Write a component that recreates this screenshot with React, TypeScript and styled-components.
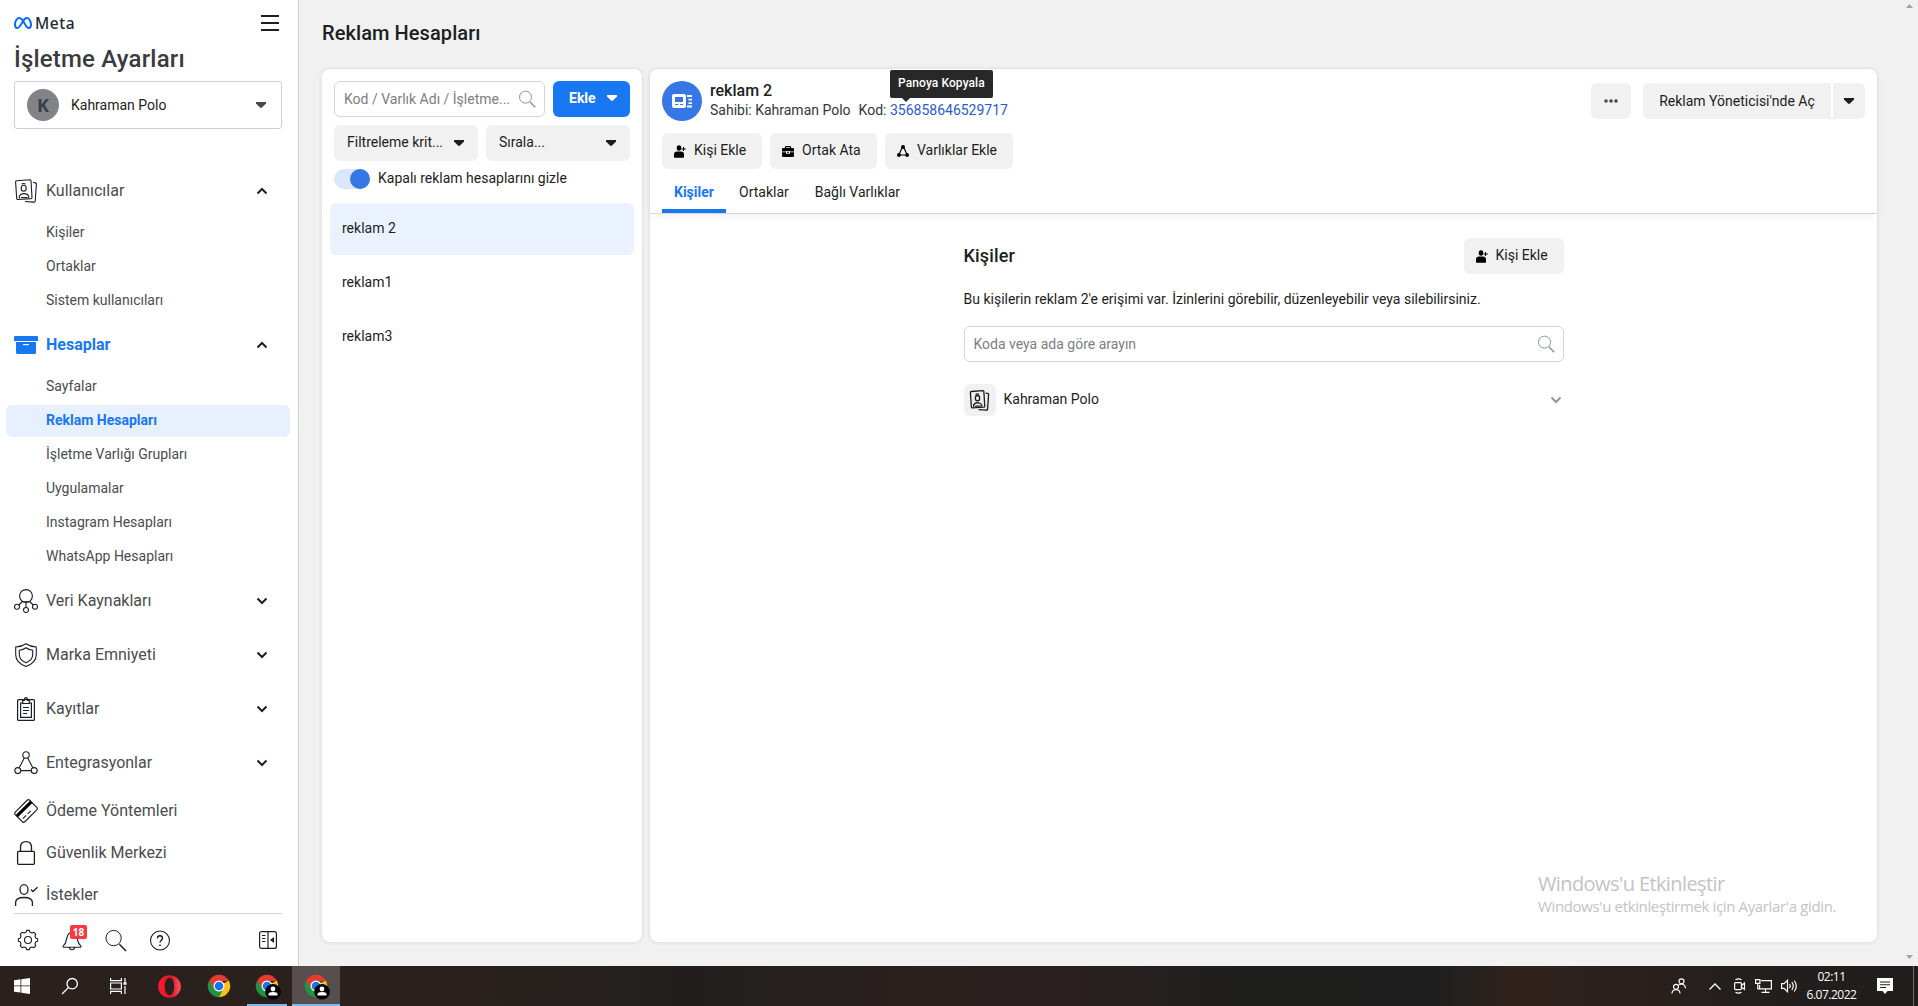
import React from "react";
import styled, { createGlobalStyle, css } from "styled-components";

const Global = createGlobalStyle`
  * { box-sizing: border-box; }
  body { margin: 0; font-family: Roboto, "Liberation Sans", sans-serif; font-size: 14px; color: #1c1e21; overflow: hidden; }
  button, input { font-family: inherit; }
`;

const Screen = styled.div`
  width: 1918px; height: 1006px; display: flex; flex-direction: column; background: #f1f1f1; position: relative; overflow: hidden;
`;
const Workspace = styled.div`flex: 1; display: flex; min-height: 0;`;

/* ---------- sidebar ---------- */
const Sidebar = styled.aside`
  width: 299px; background: #fff; border-right: 1px solid #d0d0d0; display: flex; flex-direction: column; flex-shrink: 0;
`;
const BrandRow = styled.div`
  height: 42px; padding: 4px 19px 0 14px; display: flex; align-items: center; justify-content: space-between;
`;
const Brand = styled.div`
  display: flex; align-items: center; gap: 3px; font: 500 15.5px/20px "Noto Sans", sans-serif; color: #1c2b33; letter-spacing: 0.6px;
`;
const SidebarTitle = styled.h1`
  margin: 0 14px; height: 34px; font-size: 24px; line-height: 34px; font-weight: 500; color: #3a3b3e; white-space: nowrap;
  letter-spacing: 0.18px;
`;
const AccountPicker = styled.button`
  margin: 5px 16px 0 14px; height: 48px; padding: 0 15px 0 12px; border: 1px solid #ccd0d5; border-radius: 3px; background: #fff;
  display: flex; align-items: center; gap: 12px; font-size: 14px; color: #1c1e21; text-align: left;
  > svg { color: #444950; }
`;
const Avatar = styled.span`
  width: 32px; height: 32px; border-radius: 50%; background: #828387; color: #343d4c; display: grid; place-items: center;
  font: 700 18px/1 "Open Sans", sans-serif;
`;
const Grow = styled.span`flex: 1;`;
const Nav = styled.nav`flex: 1; padding-top: 41px; min-height: 0;`;
const Section = styled.div<{ $gap: number }>`margin-bottom: ${(p) => p.$gap}px;`;
const SectionHead = styled.div<{ $active?: boolean }>`
  height: 42px; padding: 0 30px 0 14px; display: flex; align-items: center; gap: 8px; font-size: 16px; white-space: nowrap;
  color: ${(p) => (p.$active ? "#1877f2" : "#4b4c4f")}; font-weight: ${(p) => (p.$active ? 700 : 400)};
  > svg { color: ${(p) => (p.$active ? "#1877f2" : "#1c1e21")}; flex-shrink: 0; }
  > svg:last-child { color: #1c1e21; }
`;
const HeadLabel = styled.span`padding-bottom: 1px;`;
const SubList = styled.div`padding: 5px 8px 0 6px; display: flex; flex-direction: column; gap: 2px;`;
const SubItem = styled.div<{ $active?: boolean }>`
  height: 32px; line-height: 31px; padding-left: 40px; border-radius: 6px; font-size: 14px; white-space: nowrap;
  color: ${(p) => (p.$active ? "#1877f2" : "#4b4c4f")};
  font-weight: ${(p) => (p.$active ? 700 : 400)};
  background: ${(p) => (p.$active ? "#e7f0fd" : "transparent")};
`;
const SideFooter = styled.div`
  height: 53px; margin: 0 16px 0 14px; border-top: 1px solid #d2d4d8; display: flex; align-items: center; padding: 0 5px 0 2px;
  gap: 20px; color: #1c1e21;
`;
const BellWrap = styled.span`position: relative; display: flex;`;
const Badge = styled.span`
  position: absolute; left: 10px; top: -3px; width: 17px; height: 14px; border-radius: 2px; background: #fa383e; color: #fff;
  font: 700 10px/14px "Open Sans", sans-serif; text-align: center;
`;

/* ---------- main ---------- */
const Main = styled.main`flex: 1; display: flex; flex-direction: column; padding: 0 24px 24px 23px; min-width: 0;`;
const PageTitle = styled.h2`
  margin: 0; height: 69px; line-height: 66px; font-size: 20px; font-weight: 500; color: #1c1e21; letter-spacing: 0.08px;
`;
const Panels = styled.div`flex: 1; display: flex; gap: 8px; min-height: 0;`;
const card = css`background: #fff; border-radius: 8px; box-shadow: 0 0 4px rgba(0, 0, 0, 0.12);`;
const ListPanel = styled.section`${card} width: 320px; padding: 12px 8px; display: flex; flex-direction: column;`;
const Row = styled.div<{ $mt?: number }>`display: flex; gap: 8px; padding: 0 4px; margin-top: ${(p) => p.$mt ?? 0}px;`;
const SearchBox = styled.div`
  flex: 1; height: 36px; border: 1px solid #d3d5d9; border-radius: 6px; display: flex; align-items: center; background: #fff;
  padding: 0 8px 0 9px; color: #7c7e84; justify-content: space-between; white-space: nowrap;
  svg { color: #8d949e; }
`;
const Primary = styled.button`
  width: 77px; height: 36px; border: 0; border-radius: 6px; background: #1877f2; color: #fff; font-size: 14px; font-weight: 700;
  padding: 0 13px 2px 16px; display: flex; align-items: center; justify-content: space-between;
`;
const Dropdown = styled.button`
  flex: 1; height: 36px; border: 0; border-radius: 6px; background: #f1f1f1; color: #1c1e21; font-size: 14px;
  padding: 0 14px 2px 13px; display: flex; align-items: center; justify-content: space-between;
  svg { margin-top: 1px; }
`;
const ToggleRow = styled.div`
  height: 20px; margin: 8px 4px 14px; display: flex; align-items: center; gap: 8px; line-height: 18px;
`;
const ToggleLabel = styled.span`padding-bottom: 2px;`;
const Toggle = styled.span`
  width: 36px; height: 20px; border-radius: 10px; background: #dbe8fc; display: flex; justify-content: flex-end;
  &::after { content: ""; width: 20px; height: 20px; border-radius: 50%; background: #3578e5; }
`;
const AssetRow = styled.div<{ $active?: boolean }>`
  height: 52px; margin-bottom: 2px; padding: 0 12px 2px; border-radius: 6px; display: flex; align-items: center;
  background: ${(p) => (p.$active ? "#ebf2ff" : "transparent")};
`;

const Detail = styled.section`${card} flex: 1; display: flex; flex-direction: column; min-width: 0;`;
const DetailHead = styled.header`
  height: 145px; padding: 12px 12px 0; border-bottom: 1px solid #d6d8da; display: flex; flex-direction: column;
  box-shadow: 0 5px 10px -4px rgba(0, 0, 0, 0.08);
`;
const HeadTop = styled.div`height: 40px; display: flex; align-items: center; gap: 8px;`;
const AssetIcon = styled.div`
  width: 40px; height: 40px; border-radius: 50%; background: #3578e5; display: grid; place-items: center; color: #fff;
`;
const AssetMeta = styled.div`flex: 1; white-space: nowrap;`;
const AssetName = styled.div`font-size: 16px; font-weight: 500; line-height: 17px; height: 19px;`;
const MetaLine = styled.div`display: flex; gap: 8px; line-height: 19px; height: 19px; color: #33363a;`;
const Code = styled.span`position: relative; color: #2a5bd0;`;
const Tip = styled.span`
  position: absolute; left: 0; bottom: 20px; width: 103px; height: 28px; border-radius: 2px; background: #282828; color: #fff;
  font-size: 12px; font-weight: 500; line-height: 27px; text-align: center; letter-spacing: 0.1px;
  &::after { content: ""; position: absolute; left: 12px; top: 28px; border: 4px solid transparent; border-top-color: #282828; border-bottom: 0; }
`;
const Button = styled.button<{ $w: number; $r?: string }>`
  width: ${(p) => p.$w}px; height: 36px; border: 0; border-radius: ${(p) => p.$r ?? "6px"}; background: #f1f1f1; color: #1c1e21;
  font-size: 14px; padding: 0 0 1px; display: flex; align-items: center; justify-content: center; gap: 8px; white-space: nowrap;
`;
const ActionButton = styled(Button)`justify-content: flex-start; padding: 0 0 2px 12px; svg { margin-top: 2px; }`;
const Split = styled.div`display: flex; gap: 2px; margin-left: 4px;`;
const Actions = styled.div`display: flex; gap: 8px; margin-top: 12px;`;
const Tabs = styled.div`display: flex; height: 44px; margin-top: auto;`;
const Tab = styled.div<{ $active?: boolean }>`
  padding: 0 13px; line-height: 46px; height: 44px; ${(p) =>
    p.$active && "width: 64px; padding: 0 0 0 12px; color: #1877f2; font-weight: 700; border-bottom: 4px solid #1877f2;"}
`;
const People = styled.div`width: 600px; margin: 24px auto 0; padding: 0; display: flex; flex-direction: column;`;
const PeopleHead = styled.div`height: 36px; display: flex; align-items: center; justify-content: space-between;`;
const PeopleTitle = styled.h3`margin: 0; padding-bottom: 2px; font-size: 18px; font-weight: 500; letter-spacing: 0.15px;`;
const Description = styled.p`margin: 16px 0 18px; height: 18px; line-height: 18px; white-space: nowrap;`;
const PeopleSearch = styled.div`display: flex; height: 36px;`;
const Person = styled.div`
  margin-top: 22px; height: 32px; display: flex; align-items: center; gap: 8px; padding-right: 2px; line-height: 16px;
  > svg { color: #8d949e; }
`;
const PersonName = styled.span`padding-bottom: 2px;`;
const PersonIcon = styled.span`
  width: 32px; height: 32px; border-radius: 6px; background: #f1f1f1; display: grid; place-items: center;
`;

const ScrollTrack = styled.div`
  width: 17px; background: #f1f1f1; display: flex; flex-direction: column; align-items: center; justify-content: space-between; padding: 4px 0 7px;
  color: #a3a3a3;
`;
const Watermark = styled.div`
  position: absolute; left: 1538px; top: 871px; color: #c3c3c3; font-family: "Open Sans", sans-serif; white-space: nowrap;
`;
const WatermarkTitle = styled.div`font-size: 20px; line-height: 26px; letter-spacing: -0.6px;`;
const WatermarkText = styled.div`font-size: 15px; line-height: 19px; letter-spacing: -0.36px;`;

/* ---------- taskbar ---------- */
const Taskbar = styled.footer`
  height: 40px; background: linear-gradient(90deg, #2a201e 0%, #2a201e 14%, #2a211e 24%, #211f1d 36%, #2c211f 49%, #2a201f 55%, #1f1f1e 65%, #1f1f1f 75%, #30231d 79%, #2b201d 85%, #221f1d 91%, #201d1c 100%);
  display: flex; color: #fff;
`;
const TaskItem = styled.div<{ $w: number; $open?: boolean; $active?: boolean }>`
  width: ${(p) => p.$w}px; display: grid; place-items: center;
  background: ${(p) => (p.$active ? "#564e4c" : "transparent")};
  border-bottom: ${(p) => (p.$open ? "2px solid #76b9ed" : "0")};
  padding-top: ${(p) => (p.$open ? 2 : 0)}px;
  margin-right: ${(p) => (p.$open && !p.$active ? 5 : 0)}px;
`;
const TaskGap = styled.span`width: 8px;`;
const Tray = styled.div`display: flex; align-items: center; margin-left: auto;`;
const TrayIcon = styled.div<{ $w: number }>`width: ${(p) => p.$w}px; display: grid; place-items: center;`;
const Clock = styled.div`
  width: 73px; font: 12px/18px "Open Sans", sans-serif; text-align: center; letter-spacing: -0.5px;
`;
const DesktopEdge = styled.div`width: 5px; height: 40px; border-left: 1px solid #6d6a69; margin-left: 11px;`;

/* ---------- icons ---------- */
const S = (p: React.SVGProps<SVGSVGElement> & { size?: number }) => {
  const { size = 24, ...rest } = p;
  return <svg width={size} height={size} viewBox="0 0 24 24" fill="none" stroke="currentColor" strokeWidth={1.1} {...rest} />;
};
const Caret = () => <svg width="10" height="6" viewBox="0 0 10 6"><path d="M0 0h10v1.5L6 5.5Q5 6.3 4 5.5L0 1.5z" fill="currentColor" /></svg>;
const Chevron = ({ up }: { up?: boolean }) => (
  <svg width="12" height="8" viewBox="0 0 12 8" fill="none" stroke="currentColor" strokeWidth="2">
    <path d={up ? "M1.5 6.5 6 2l4.5 4.5" : "M1.5 1.5 6 6l4.5-4.5"} />
  </svg>
);
const MetaMark = () => (
  <svg width="18" height="12" viewBox="0 0 18 12" fill="none" stroke="#0b6cf0" strokeWidth="2">
    <path d="M9 3.6C7.6 1.8 6.6 1 5.3 1 3 1 1 4 1 7.5 1 9.8 1.9 11 3.4 11 5 11 6 9.4 9 4.2 10.2 2 11.3 1 12.8 1 15.1 1 17 4 17 7.600 17 9.900 16.100 11 14.700 11 13 11 12 9.300 9 3.600z" />
  </svg>
);
const Burger = () => <svg width="18" height="16" viewBox="0 0 18 16"><path d="M0 0h18v2H0zM0 7h18v2H0zM0 14h18v2H0z" fill="#1c1e21" /></svg>;
const PeopleIcon = ({ size = 24, weight = 1.1 }: { size?: number; weight?: number }) => (
  <S size={size} strokeWidth={weight}>
    <path d="M2.500 1.700 16 .8q1 0 1 1L18 18.500q0 1-1 1.100L3.700 20.500q-1 0-1-1L1.600 2.700q0-1 .9-1z" />
    <path d="M19 3.500l2.500.4q1 .2.900 1.100L21.200 22q-.1 1.200-1.200 1.100L11 22.500" />
    <ellipse cx="9.700" cy="9.300" rx="2.500" ry="3" /><path d="M7.500 5q2-1 4 0M5.300 19.500v-2.500q1-2 4-2.400h1.500q3.200.5 3.700 2.400l.4 2M7 18.500h6.500" />
  </S>
);
const BoxIcon = () => <svg width="24" height="24" viewBox="0 0 24 24" fill="currentColor"><path d="M1 3h22q1 0 1 1v4H0V4q0-1 1-1zM2 9h20v10.500q0 1.500-1.500 1.500h-17Q2 21 2 19.500z" /><path d="M9 11h6v1.200H9z" fill="#fff" /></svg>;
const DataIcon = () => <S><circle cx="12" cy="7" r="6.400" /><circle cx="3" cy="17.800" r="2.500" /><circle cx="12" cy="21" r="2.500" /><circle cx="21" cy="17.800" r="2.500" /><path d="M12 13.500v5M8.300 12.500 4.800 16M15.700 12.500l3.500 3.500M8.300 12.800h7.400" /></S>;
const ShieldIcon = () => <S><path d="M12 .7C15 2.800 18 3.700 22.300 4v7.500c0 5.500-4.300 9.800-10.300 12C6 21.300 1.700 17 1.700 11.500V4C6 3.700 9 2.800 12 .7z" /><path d="M12 4.800c2 1.500 4 2.100 6.700 2.400v4.600c0 3.500-2.700 6.200-6.700 7.900-4-1.700-6.700-4.400-6.700-7.900V7.200C8 6.900 10 6.300 12 4.800z" /></S>;
const ClipIcon = () => <S strokeWidth={1.2}><rect x="3.600" y="2.700" width="16.800" height="20.700" rx="1" /><path d="M9 6H6.600v14.400h10.800V6H15M8.700 3.500h1.500Q10.500.6 12 .6t1.800 2.900h1.500v3H8.700zM9 10.500h6M9 13.500h6M9 16.500h4" /></S>;
const TriIcon = () => <S><circle cx="12" cy="4" r="3.200" /><circle cx="3.800" cy="19.600" r="3" /><circle cx="20.200" cy="19.600" r="3" /><path d="M10.300 7 5.200 16.800M13.700 7l5.100 9.800M7 19.600h10" /></S>;
const CardIcon = () => (
  <S>
    <g transform="rotate(-45 12 12)">
      <rect x="1.800" y="5.200" width="20.400" height="13.600" rx="1.800" />
      <path d="M1.800 9.200h20.400" strokeWidth="3.200" stroke="#000" />
      <path d="M4.500 15.200h4.500M11 15.200h4.500" />
    </g>
  </S>
);
const LockIcon = () => <S strokeWidth={1.3}><rect x="3.600" y="10.300" width="16.800" height="13" rx="1" /><path d="M6.500 10V6.500C6.500 3 8.500.7 12 .7s5.500 2.300 5.500 5.800V10" /></S>;
const RequestIcon = () => <S strokeWidth={1.3}><ellipse cx="10" cy="6.500" rx="4" ry="4.800" /><path d="M1.600 23v-3.500c0-3.500 2.300-5 8.400-5s8.400 1.500 8.400 5V23M17 6.500l2 2 4.500-4.300" /></S>;
const SearchIcon = ({ size = 18 }: { size?: number }) => <S size={size} strokeWidth={24 / size}><circle cx="10" cy="9.500" r="8" /><path d="M16 16l7 7" strokeWidth={36 / size} /></S>;
const gearOutline = Array.from({ length: 16 }, (_, i) => {
  const r = i % 2 ? 8 : 9.7;
  return [-0.35, 0.35]
    .map((d) => ((i + d) * Math.PI) / 8)
    .map((a) => `${(12 + r * Math.cos(a)).toFixed(2)} ${(12 + r * Math.sin(a)).toFixed(2)}`)
    .join(" ");
}).join(" ");
const GearIcon = () => <S><polygon points={gearOutline} strokeLinejoin="round" /><circle cx="12" cy="12" r="3.500" /></S>;
const BellIcon = () => <S><path d="M9.500 19.500c0 3 5 3 5 0M3.500 19.300h17q1-1-.3-2.200-1.500-1.200-2-3.100L17 9.500C16.200 6 14.500 4.500 12 4.500S7.800 6 7 9.500L5.800 14q-.5 1.900-2 3.100-1.300 1.200-.3 2.200z" /></S>;
const HelpIcon = () => <S size={25} viewBox="-1 0 25 24"><circle cx="12" cy="12" r="9.500" /><path d="M9.500 9.800c0-3.400 5-3.400 5 0 0 1.900-2.500 1.900-2.500 4.200" strokeWidth="1.400" /><path d="M11.200 16h1.600v1.600h-1.600z" fill="currentColor" stroke="none" /></S>;
const CollapseIcon = () => <svg width="18" height="18" viewBox="0 0 18 18" fill="none" stroke="currentColor" strokeWidth="1.200"><rect x=".6" y=".6" width="16.800" height="16.800" rx="2" /><path d="M9 .6v16.800M3 4.500h3.500M3 7.500h3.500M3 10.500h3.500" /><path d="M15 6v6l-4-3z" fill="currentColor" stroke="none" /></svg>;
const AddPerson = () => <svg width="12" height="13" viewBox="0 0 12 13" fill="#000"><ellipse cx="5" cy="3" rx="2.300" ry="2.800" /><path d="M0 12V9.500Q0 6.500 3 6.500h4q3 0 3 3V12q0 .7-.7.700H.7Q0 12.700 0 12zM9 2h1v1.500h1.800v1H10V6H9V4.500H7.500v-1H9z" /></svg>;
const CaseIcon = () => <svg width="12" height="11" viewBox="0 0 12 11"><path d="M3.500 2.500V1.300Q3.500.6 4.200.6h3.600q.7 0 .7.700v1.200" fill="none" stroke="#000" strokeWidth="1.200" /><path d="M1 2h10q1 0 1 1v2.500H8V5H4v.5H0V3q0-1 1-1zM0 6.300h4v1.500h4V6.300h4V10q0 1-1 1H1q-1 0-1-1z" fill="#000" /><path d="M5 5.700h2v1H5z" fill="#000" /></svg>;
const NodesIcon = () => <svg width="12" height="12" viewBox="0 0 12 12" fill="#000"><circle cx="6" cy="2" r="2" /><circle cx="1.900" cy="10" r="1.900" /><circle cx="10.100" cy="10" r="1.900" /><path d="M5 3 2 9.500M7 3l3 6.500M2 10h8" stroke="#000" strokeWidth="1.200" /></svg>;
const AdIcon = () => (
  <svg width="20" height="14" viewBox="0 0 20 14">
    <rect width="14" height="14" rx="2" fill="#fff" />
    <path d="M3 3h8v5H3zM3 10h3.500v1H3zM8 10h3v1H8z" fill="#3578e5" />
    <path d="M15 1h5v2h-5zM16.500 4.800H20v1.700h-3.500zM16.500 8.300H20V10h-3.500zM15 11.500h5v2h-5z" fill="#fff" />
  </svg>
);
const Dots = () => <svg width="14" height="4" viewBox="0 0 14 4" fill="#444950"><circle cx="2" cy="2" r="1.800" /><circle cx="7" cy="2" r="1.800" /><circle cx="12" cy="2" r="1.800" /></svg>;

const WinIcon = () => <svg width="16" height="16" viewBox="0 0 16 16" fill="#fff"><path d="M0 2.200 6.500 1.300v6.200H0zM7.300 1.200 16 0v7.500H7.300zM0 8.300h6.500v6.300L0 13.700zM7.300 8.300H16V16l-8.700-1.200z" /></svg>;
const TaskSearch = () => <svg width="18" height="18" viewBox="0 0 18 18" fill="none" stroke="#fff" strokeWidth="1.300"><circle cx="11.200" cy="6.700" r="5.200" /><path d="M7.500 10.500 1 17" /></svg>;
const TaskView = () => <svg width="17" height="16" viewBox="0 0 17 16" fill="none" stroke="#fff" strokeWidth="1.200"><path d="M.6 0v2.600h10.800V0M.6 16v-2.600h10.800V16M.6 5h10.800v6H.6zM15 0v4M15 8v8" /><path d="M13.500 4.200h3v2.600h-3z" fill="#fff" stroke="none" /></svg>;
const Opera = () => (
  <svg width="23" height="23" viewBox="0 0 23 23">
    <defs><linearGradient id="op" x1="0" x2="1"><stop offset="0" stopColor="#ff1b2d" /><stop offset=".6" stopColor="#e0142a" /><stop offset="1" stopColor="#ff5a5a" /></linearGradient></defs>
    <path fillRule="evenodd" fill="url(#op)" d="M11.500.2a11.300 11.300 0 1 0 0 22.600 11.300 11.300 0 0 0 0-22.600zM11.500 2.800c2.800 0 4.700 3.800 4.700 8.700s-1.900 8.700-4.700 8.700-4.700-3.800-4.700-8.700 1.900-8.700 4.700-8.700z" />
  </svg>
);
const Chrome = ({ user }: { user?: boolean }) => (
  <svg width="26" height="26" viewBox="0 0 26 26" overflow="visible">
    <path d="M13 13 22.700 7.400A11.200 11.200 0 0 1 13 24.200z" fill="#fbc116" />
    <path d="M13 13V24.200A11.200 11.200 0 0 1 3.300 7.400z" fill="#229342" />
    <path d="M3.300 7.400 8 15.500 13 8h9.900l-.2-.6A11.200 11.200 0 0 0 3.300 7.400z" fill="#e33b2e" />
    <path d="M13 24.200 18 16l-5 2-4.500-2z" fill="#fbc116" />
    <path d="M8.500 15.500 13 18l3.500-.2-3.500 6.400-3-1z" fill="#229342" />
    <circle cx="13" cy="13" r="5.500" fill="#fff" /><circle cx="13" cy="13" r="4.300" fill="#1a73e8" />
    {user && <g><circle cx="19" cy="18.700" r="7.800" fill="#000" /><circle cx="19" cy="16" r="2.400" fill="#fff" /><path d="M14.500 22.500v-1.200q0-2.300 4.500-2.300t4.500 2.300v1.200z" fill="#fff" /></g>}
  </svg>
);
const TrayPeople = () => <svg width="16" height="16" viewBox="0 0 16 16" fill="none" stroke="#fff" strokeWidth="1.200"><circle cx="10.500" cy="3.300" r="2.500" /><circle cx="5" cy="8.800" r="2.500" /><path d="M1 15.500c0-5 8-5 8 0M8 6.800c3-2 6.500 0 6.500 3.400" /></svg>;
const TrayUp = () => <svg width="12" height="7" viewBox="0 0 12 7" fill="none" stroke="#fff" strokeWidth="1.300"><path d="M.5 6.500 6 1l5.500 5.500" /></svg>;
const TrayMeet = () => <svg width="13" height="16" viewBox="0 0 13 16" fill="none" stroke="#fff" strokeWidth="1.200"><rect x="1.600" y="4.600" width="6.800" height="7" rx="1" /><path d="M8.500 7.500 11.500 5v6.300l-3-2M2.500 1.800q3-1.800 6 0M2.500 14.300q3 1.800 6 0" /></svg>;
const TrayNet = () => <svg width="17" height="14" viewBox="0 0 17 14" fill="none" stroke="#fff" strokeWidth="1.200"><path d="M6 1.600h10.400v8.300H4.600V6M10.500 10v3M6.500 13.300h8M.6.600h4.300v3.800H.6zM2.800 4.500v5.500H5" /></svg>;
const TraySound = () => <svg width="17" height="14" viewBox="0 0 17 14" fill="none" stroke="#fff" strokeWidth="1.200"><path d="M.6 4.600H3l3.500-3.300v11.400L3 9.400H.6zM8.500 5q1.500 2 0 4M10.800 3.200q3 3.800 0 7.600M13.200 1.500q4.200 5.500 0 11" /></svg>;
const TrayNote = () => <svg width="16" height="16" viewBox="0 0 16 16"><path d="M0 0h16v13H10.500L8 16l-2.500-3H0z" fill="#fff" /><path d="M3 4h10M3 6.800h10M3 9.500h6" stroke="#231f1d" strokeWidth="1.100" /></svg>;

type NavSection = { label: string; icon: React.ReactNode; gap: number; chevron?: "up" | "down"; active?: boolean; items?: string[] };
const sections: NavSection[] = [
  { label: "Kullanıcılar", icon: <PeopleIcon />, gap: 7, chevron: "up", items: ["Kişiler", "Ortaklar", "Sistem kullanıcıları"] },
  { label: "Hesaplar", icon: <BoxIcon />, gap: 7, chevron: "up", active: true, items: ["Sayfalar", "Reklam Hesapları", "İşletme Varlığı Grupları", "Uygulamalar", "Instagram Hesapları", "WhatsApp Hesapları"] },
  { label: "Veri Kaynakları", icon: <DataIcon />, gap: 12, chevron: "down" },
  { label: "Marka Emniyeti", icon: <ShieldIcon />, gap: 12, chevron: "down" },
  { label: "Kayıtlar", icon: <ClipIcon />, gap: 12, chevron: "down" },
  { label: "Entegrasyonlar", icon: <TriIcon />, gap: 6, chevron: "down" },
  { label: "Ödeme Yöntemleri", icon: <CardIcon />, gap: 0 },
  { label: "Güvenlik Merkezi", icon: <LockIcon />, gap: 0 },
  { label: "İstekler", icon: <RequestIcon />, gap: 0 },
];

export default function App() {
  return (
    <Screen>
      <Global />
      <Workspace>
        <Sidebar>
          <BrandRow><Brand><MetaMark />Meta</Brand><Burger /></BrandRow>
          <SidebarTitle>İşletme Ayarları</SidebarTitle>
          <AccountPicker><Avatar>K</Avatar>Kahraman Polo<Grow /><Caret /></AccountPicker>
          <Nav>
            {sections.map((s) => (
              <Section key={s.label} $gap={s.gap}>
                <SectionHead $active={s.active}>
                  {s.icon}<HeadLabel>{s.label}</HeadLabel>
                  {s.chevron && <><Grow /><Chevron up={s.chevron === "up"} /></>}
                </SectionHead>
                {s.items && (
                  <SubList>{s.items.map((i) => <SubItem key={i} $active={i === "Reklam Hesapları"}>{i}</SubItem>)}</SubList>
                )}
              </Section>
            ))}
          </Nav>
          <SideFooter>
            <GearIcon />
            <BellWrap><BellIcon /><Badge>18</Badge></BellWrap>
            <SearchIcon size={23} />
            <HelpIcon />
            <Grow />
            <CollapseIcon />
          </SideFooter>
        </Sidebar>
        <Main>
          <PageTitle>Reklam Hesapları</PageTitle>
          <Panels>
            <ListPanel>
              <Row>
                <SearchBox>Kod / Varlık Adı / İşletme...<SearchIcon /></SearchBox>
                <Primary>Ekle<Caret /></Primary>
              </Row>
              <Row $mt={8}>
                <Dropdown>Filtreleme krit...<Caret /></Dropdown>
                <Dropdown>Sırala...<Caret /></Dropdown>
              </Row>
              <ToggleRow><Toggle /><ToggleLabel>Kapalı reklam hesaplarını gizle</ToggleLabel></ToggleRow>
              <AssetRow $active>reklam 2</AssetRow>
              <AssetRow>reklam1</AssetRow>
              <AssetRow>reklam3</AssetRow>
            </ListPanel>
            <Detail>
              <DetailHead>
                <HeadTop>
                  <AssetIcon><AdIcon /></AssetIcon>
                  <AssetMeta>
                    <AssetName>reklam 2</AssetName>
                    <MetaLine>
                      <span>Sahibi: Kahraman Polo</span>
                      <span>Kod: <Code>356858646529717<Tip>Panoya Kopyala</Tip></Code></span>
                    </MetaLine>
                  </AssetMeta>
                  <Button $w={40}><Dots /></Button>
                  <Split>
                    <Button $w={188} $r="6px 0 0 6px">Reklam Yöneticisi'nde Aç</Button>
                    <Button $w={32} $r="0 6px 6px 0"><Caret /></Button>
                  </Split>
                </HeadTop>
                <Actions>
                  <ActionButton $w={100}><AddPerson />Kişi Ekle</ActionButton>
                  <ActionButton $w={107}><CaseIcon />Ortak Ata</ActionButton>
                  <ActionButton $w={128}><NodesIcon />Varlıklar Ekle</ActionButton>
                </Actions>
                <Tabs><Tab $active>Kişiler</Tab><Tab>Ortaklar</Tab><Tab>Bağlı Varlıklar</Tab></Tabs>
              </DetailHead>
              <People>
                <PeopleHead>
                  <PeopleTitle>Kişiler</PeopleTitle>
                  <ActionButton $w={100}><AddPerson />Kişi Ekle</ActionButton>
                </PeopleHead>
                <Description>Bu kişilerin reklam 2'e erişimi var. İzinlerini görebilir, düzenleyebilir veya silebilirsiniz.</Description>
                <PeopleSearch><SearchBox>Koda veya ada göre arayın<SearchIcon /></SearchBox></PeopleSearch>
                <Person><PersonIcon><PeopleIcon size={21} weight={1.5} /></PersonIcon><PersonName>Kahraman Polo</PersonName><Grow /><Chevron /></Person>
              </People>
            </Detail>
          </Panels>
        </Main>
        <ScrollTrack>
          <svg width="7" height="4"><path d="M0 4h7L3.500 0z" fill="currentColor" /></svg>
          <svg width="7" height="4"><path d="M0 0h7L3.500 4z" fill="currentColor" /></svg>
        </ScrollTrack>
      </Workspace>
      <Watermark>
        <WatermarkTitle>Windows'u Etkinleştir</WatermarkTitle>
        <WatermarkText>Windows'u etkinleştirmek için Ayarlar'a gidin.</WatermarkText>
      </Watermark>
      <Taskbar>
        <TaskItem $w={44}><WinIcon /></TaskItem>
        <TaskItem $w={52}><TaskSearch /></TaskItem>
        <TaskItem $w={44}><TaskView /></TaskItem>
        <TaskItem $w={58}><Opera /></TaskItem>
        <TaskItem $w={41}><Chrome /></TaskItem>
        <TaskGap />
        <TaskItem $w={40} $open><Chrome user /></TaskItem>
        <TaskItem $w={48} $open $active><Chrome user /></TaskItem>
        <Tray>
          <TrayIcon $w={36}><TrayPeople /></TrayIcon>
          <TrayIcon $w={36}><TrayUp /></TrayIcon>
          <TrayIcon $w={13}><TrayMeet /></TrayIcon>
          <TrayIcon $w={35}><TrayNet /></TrayIcon>
          <TrayIcon $w={14}><TraySound /></TrayIcon>
          <Clock>02:11<br />6.07.2022</Clock>
          <TrayIcon $w={34}><TrayNote /></TrayIcon>
          <DesktopEdge />
        </Tray>
      </Taskbar>
    </Screen>
  );
}
